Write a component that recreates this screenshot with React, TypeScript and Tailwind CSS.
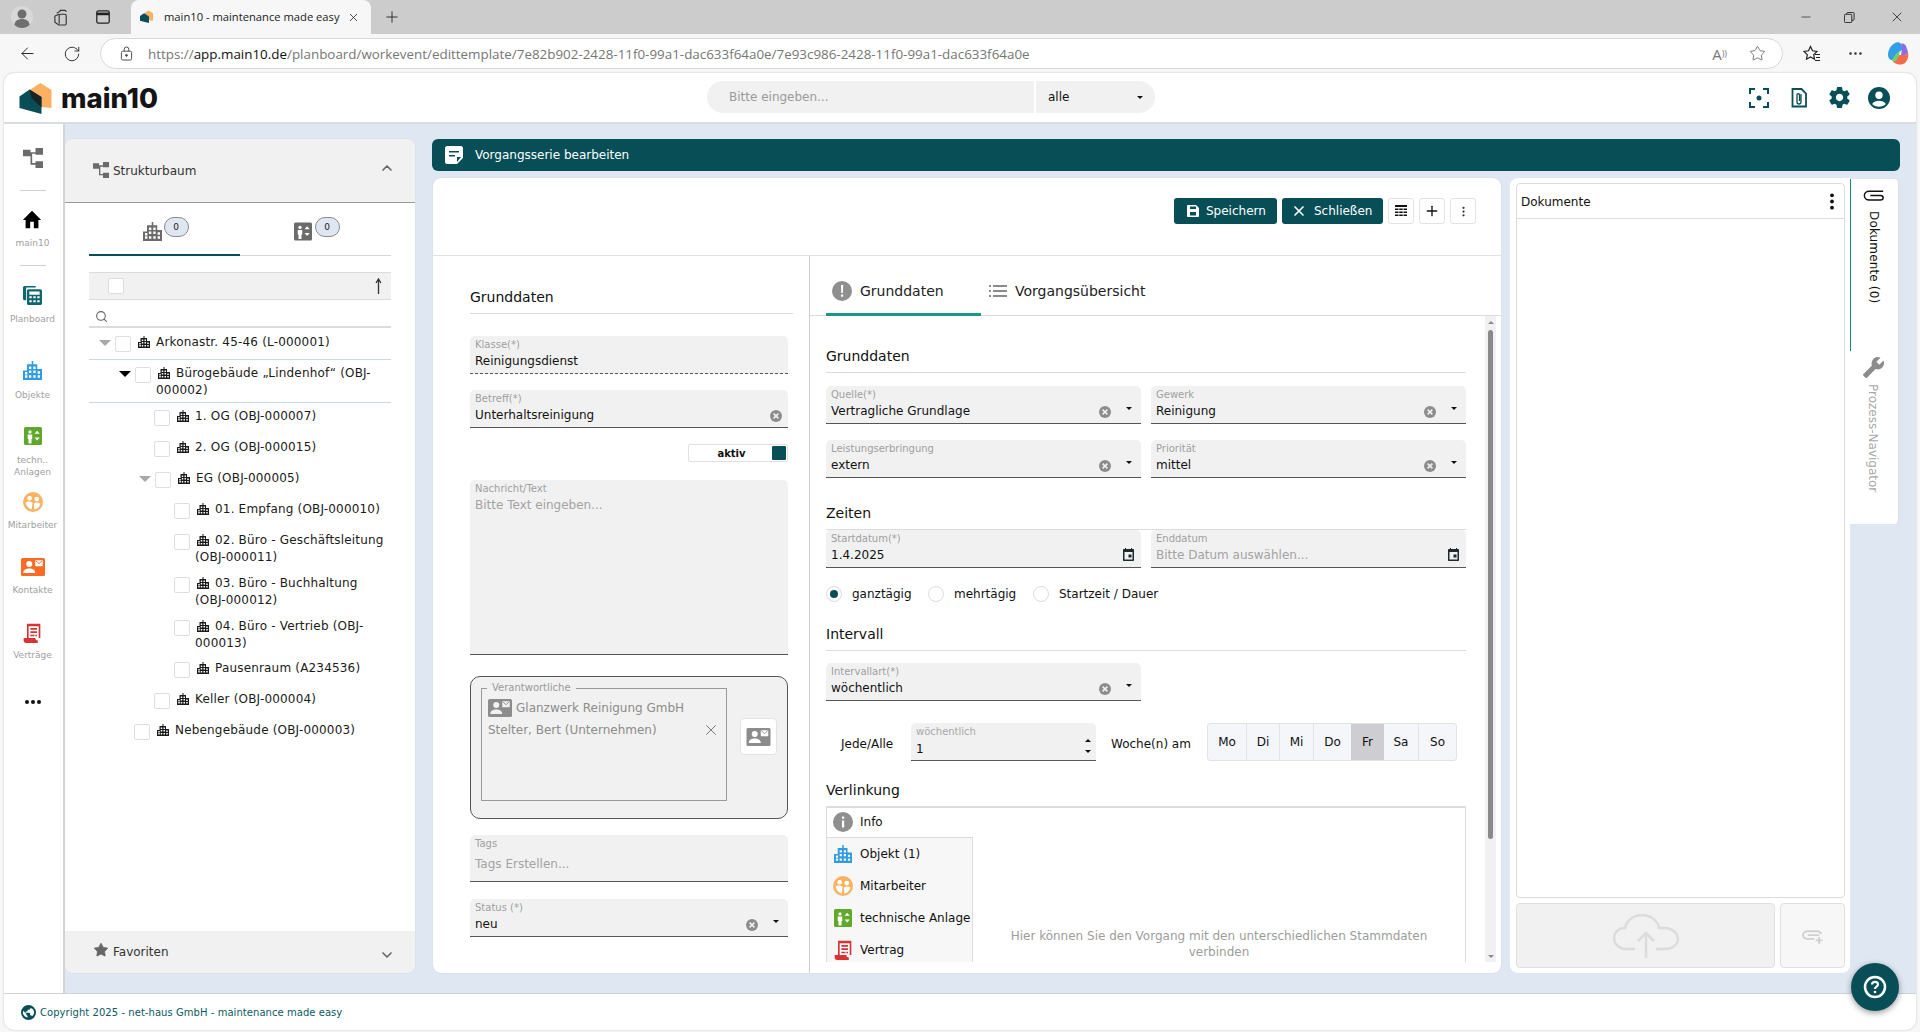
import React from "react";
import { ArrowLeft, RotateCw, Plus, X, Minus, ChevronUp, ChevronDown, Search, MoreHorizontal, Star } from "lucide-react";

function Building({ className = "" }: { className?: string }) {
  return (
    <svg viewBox="0 0 24 24" className={className} fill="currentColor">
      <path
        fillRule="evenodd"
        d="M11 0h2v4h5v6h6v14H0V12h5V4h6zM7.500 7v3h3V7zm5.500 0v3h3V7zm-5.500 5v3h3v-3zm5.500 0v3h3v-3zm5.500 1v3h3v-3zm-16 1v3h3v-3zm5 4v3h3v-3zm5.500 0v3h3v-3zm5.500 0v3h3v-3zm-16 0v3h3v-3z"
      />
    </svg>
  );
}

function TreeIcon({ className = "" }: { className?: string }) {
  return (
    <svg viewBox="0 0 24 24" className={className} fill="currentColor">
      <path d="M0 2h9v8H0zM15 0h9v8h-9zM15 16h9v8h-9zM9 5h6v2H11v11h4v2h-6z" />
    </svg>
  );
}

function Elevator({ className = "" }: { className?: string }) {
  return (
    <svg viewBox="0 0 24 24" className={className}>
      <rect x="0" y="0" width="24" height="24" rx="2" fill="currentColor" />
      <circle cx="8" cy="6.500" r="2.200" fill="#fff" />
      <path d="M5 10h6v6h-1v6H6v-6H5z" fill="#fff" />
      <path d="M14 9l3.500-4 3.500 4zM14 14h7l-3.500 4z" fill="#fff" />
    </svg>
  );
}

function People({ className = "" }: { className?: string }) {
  return (
    <svg viewBox="0 0 24 24" className={className}>
      <circle cx="12" cy="12" r="12" fill="currentColor" />
      <circle cx="8" cy="7.500" r="2.800" fill="#fff" />
      <circle cx="16.500" cy="8.500" r="2.800" fill="#fff" />
      <path d="M3 13c2-2 6-2 8.500 0l-1 8C6.500 20 4 17 3 13zM13 14c2-2 6-2 8 0-.8 3.600-3.600 6.400-7.500 7z" fill="#fff" />
    </svg>
  );
}

function Card({ className = "", accent = "#fff" }: { className?: string; accent?: string }) {
  return (
    <svg viewBox="0 0 32 24" className={className}>
      <rect width="32" height="24" rx="2" fill="currentColor" />
      <circle cx="11" cy="8" r="4" fill={accent} />
      <path d="M3 20c0-4 3-6 8-6s8 2 8 6z" fill={accent} />
      <rect x="19" y="3" width="10" height="8" fill={accent} />
      <path d="M19.500 3.500l4.500 4 4.500-4" stroke="currentColor" strokeWidth="1.200" fill="none" />
    </svg>
  );
}

function Contract({ className = "" }: { className?: string }) {
  return (
    <svg viewBox="0 0 20 24" className={className}>
      <path d="M6 2h12v16H6z" fill="#fff" />
      <path d="M4 1h16v17h-2V4H6v14H4z" fill="currentColor" />
      <path d="M0 18h14c0 2 1 3 3 3v3H3c-2 0-3-1-3-3z" fill="currentColor" />
      <path d="M8 6h8v2H8zM8 10h8v2H8zM8 14h5v2H8zM14 14h2v2h-2z" fill="currentColor" />
    </svg>
  );
}

function Planboard({ className = "" }: { className?: string }) {
  return (
    <svg viewBox="0 0 24 24" className={className} fill="currentColor">
      <path d="M2 0h14v2H4v16H2C1 18 0 17 0 16V2C0 1 1 0 2 0z" />
      <path fillRule="evenodd" d="M7 4h15c1 0 2 1 2 2v16c0 1-1 2-2 2H7c-1 0-2-1-2-2V6c0-1 1-2 2-2zm1 3v4h13V7zm0 6v2.500h3V13zm5 0v2.500h3V13zm5 0v2.500h3V13zM8 18v2.500h3V18zm5 0v2.500h3V18zm5 0v2.500h3V18z" />
    </svg>
  );
}

function Clear() {
  return (
    <svg viewBox="0 0 12 12" className="w-[12px] h-[12px] shrink-0 text-[#8c8c8c]">
      <circle cx="6" cy="6" r="6" fill="currentColor" />
      <path d="M3.600 3.600l4.800 4.800M8.400 3.600l-4.800 4.800" stroke="#f1f1f1" strokeWidth="1.500" />
    </svg>
  );
}

function Caret({ className = "" }: { className?: string }) {
  return (
    <svg viewBox="0 0 6 3" className={`w-[6px] h-[3px] shrink-0 ${className}`} fill="currentColor">
      <path d="M0 0h6L3 3z" />
    </svg>
  );
}

function CalendarIcon() {
  return (
    <svg viewBox="0 0 11 13" className="w-[11px] h-[13px] shrink-0 text-[#1d2a2d] -mt-[3px]" fill="currentColor">
      <path fillRule="evenodd" d="M2 0h1v1h5V0h1v1h1c.6 0 1 .4 1 1v10c0 .6-.4 1-1 1H1c-.6 0-1-.4-1-1V2c0-.6.4-1 1-1h1zM1.500 4v7.500h8V4zM5.500 6.500h3v3h-3z" />
    </svg>
  );
}

function Field({
  label,
  value,
  placeholder,
  clear,
  caret,
  cal,
  dashed,
}: {
  label: string;
  value?: string;
  placeholder?: string;
  clear?: boolean;
  caret?: boolean;
  cal?: boolean;
  dashed?: boolean;
}) {
  return (
    <div
      className={`h-[38px] bg-[#f1f1f1] rounded-t-[5px] pl-[5px] flex flex-col border-b ${
        dashed ? "border-dashed border-[#555]" : "border-[#555]"
      }`}
    >
      <div className="text-[10px] leading-[12px] mt-[3px] text-[#9f9f9f]">{label}</div>
      <div className="flex items-center h-[17px] mt-[2px]">
        <span className={`flex-1 text-[12px] leading-[17px] truncate ${value ? "text-[#111]" : "text-[#a3a3a3]"}`}>
          {value ?? placeholder}
        </span>
        {clear && (
          <span className={caret ? "mr-[21px]" : "mr-[6px]"}>
            <Clear />
          </span>
        )}
        {caret && <Caret className="mr-[9px] -mt-[6px] text-[#111] -ml-[6px]" />}
        {cal && (
          <span className="mr-[7px]">
            <CalendarIcon />
          </span>
        )}
      </div>
    </div>
  );
}

function SectionHead({ children, className = "", pb = "pb-[7px]" }: { children: React.ReactNode; className?: string; pb?: string }) {
  return <div className={`text-[14px] leading-[18px] text-[#111] border-b border-[#dcdcdc] ${pb} ${className}`}>{children}</div>;
}

function TreeRow({
  pl,
  tri,
  text,
  bordered,
  tight,
}: {
  pl: string;
  tri?: "open" | "active";
  text: string;
  bordered?: boolean;
  tight?: boolean;
}) {
  return (
    <div className={`flex items-start min-h-[31px] ${pl} ${bordered ? "border-b border-[#c8dadb]" : ""}`}>
      {tri && (
        <span className="w-[16px] shrink-0 pt-[11px]">
          <svg viewBox="0 0 12 6" className={`w-[12px] h-[6px] ${tri === "active" ? "text-black" : "text-[#a8a8a8]"}`} fill="currentColor">
            <path d="M0 0h12L6 6z" />
          </svg>
        </span>
      )}
      <span className="w-[16px] h-[16px] mt-[7px] mr-[5px] shrink-0 rounded-[2px] border border-[#dedede] bg-white" />
      <div className={`pt-[5px] pr-[4px] ${bordered || tight ? "pb-[3px]" : "pb-[4px]"} leading-[17px] text-[12px] tracking-[0.18px] text-[#1a1a1a] flex-1`}>
        <Building className="inline-block w-[12px] h-[12px] ml-[2px] mr-[6px] -mt-[1px] align-[-2px] text-[#1a1a1a]" />
        {text}
      </div>
    </div>
  );
}

function NavItem({ icon, label, className = "" }: { icon: React.ReactNode; label?: React.ReactNode; className?: string }) {
  return (
    <div className={`flex flex-col items-center ${className}`}>
      {icon}
      {label && <div className="text-[9px] leading-[12px] text-[#a0a0a0] text-center">{label}</div>}
    </div>
  );
}

function Radio({ checked, label, className = "" }: { checked?: boolean; label: string; className?: string }) {
  return (
    <div className={`flex items-center ${className}`}>
      <span className="w-[16px] h-[16px] rounded-full border border-[#dcdcdc] bg-white flex items-center justify-center">
        {checked && <span className="w-[8px] h-[8px] rounded-full bg-[#084e57]" />}
      </span>
      <span className="ml-[10px] text-[12px] leading-[16px] text-[#111]">{label}</span>
    </div>
  );
}

function LinkTab({ icon, label }: { icon: React.ReactNode; label: string }) {
  return (
    <div className="h-[32px] flex items-center pl-[6px] text-[12px] text-[#111]">
      <span className="w-[20px] flex justify-center mr-[7px] shrink-0">{icon}</span>
      <span className="whitespace-nowrap">{label}</span>
    </div>
  );
}

function IconBtn({ children }: { children: React.ReactNode }) {
  return (
    <button className="w-[26px] h-[26px] rounded-[3px] border border-[#e3e3e3] bg-white flex items-center justify-center">
      {children}
    </button>
  );
}

export default function App() {
  return (
    <div className="relative w-[1920px] h-[1032px] overflow-hidden flex flex-col bg-[#f7f7f7] font-['DejaVu_Sans',sans-serif] text-[12px]">
      {/* browser tab strip */}
      <div className="h-[34px] bg-[#cccccc] flex items-center shrink-0 font-['Open_Sans',sans-serif] text-[#222]">
        <div className="w-[131px] flex items-center shrink-0">
          <svg viewBox="0 0 22 24" className="w-[22px] h-[24px] ml-[11px] text-[#6e6e6e]" fill="currentColor">
            <circle cx="11" cy="12" r="11" fill="#d8d8d8" />
            <circle cx="11" cy="9" r="4.500" />
            <path d="M3.500 20c0-4 3.500-6 7.500-6s7.500 2 7.500 6c-2 2-4.500 3-7.500 3s-5.500-1-7.500-3z" />
          </svg>
          <svg viewBox="0 0 18 18" className="w-[17px] h-[17px] ml-[20px] text-[#333]" fill="none" stroke="currentColor" strokeWidth="1.200">
            <path d="M7 1.500h5.500c1 0 1.500 .5 1.500 1.500M4 4.500L8 2M2 7.500V14l4 3h6.500c1 0 1.500-.5 1.500-1.500V7c0-1-.5-1.500-1.500-1.500H8c-1 0-1.500 .5-1.500 1.500v8.500M2 7.500l4.500-2" />
          </svg>
          <svg viewBox="0 0 18 18" className="w-[16px] h-[16px] ml-[25px] text-[#222]" fill="none" stroke="currentColor" strokeWidth="1.400">
            <rect x="2" y="2" width="14" height="14" rx="2" />
            <path d="M2 5.500h14" strokeWidth="3" />
          </svg>
        </div>
        <div className="w-[240px] h-[34px] mt-0 bg-[#f7f7f7] rounded-t-[8px] flex items-center pl-[9px] shrink-0">
          <svg viewBox="0 0 32 32" className="w-[13px] h-[14px] shrink-0">
            <path d="M10 7L21 0L32 7V25L22 24V14Z" fill="#fbb161" />
            <path d="M0 13.500L10 6.500L22 14V31L0 25Z" fill="#084e57" />
          </svg>
          <span className="ml-[11px] text-[11.2px] leading-[16px] whitespace-nowrap w-[183px]">main10 - maintenance made easy</span>
          <X className="w-[13px] h-[13px] text-[#222]" strokeWidth={1.5} />
        </div>
        <Plus className="w-[18px] h-[18px] ml-[12px] text-[#222]" strokeWidth={1.2} />
        <div className="flex-1" />
        <Minus className="w-[14px] h-[14px] mr-[31px] text-[#222]" strokeWidth={1.2} />
        <svg viewBox="0 0 12 12" className="w-[11px] h-[11px] mr-[34px] text-[#222]" fill="none" stroke="currentColor" strokeWidth="1">
          <rect x=".5" y="2.500" width="8" height="9" rx="1" />
          <path d="M3 2.500V1.500c0-.5 .5-1 1-1h6c.5 0 1 .5 1 1V8c0 .5-.5 1-1 1H8.500" />
        </svg>
        <X className="w-[16px] h-[16px] mr-[15px] text-[#222]" strokeWidth={1.2} />
      </div>

      {/* browser toolbar */}
      <div className="h-[39px] flex items-center shrink-0 font-['Open_Sans',sans-serif]">
        <ArrowLeft className="w-[19px] h-[19px] ml-[18px] text-[#222]" strokeWidth={1.2} />
        <RotateCw className="w-[18px] h-[18px] ml-[26px] text-[#222]" strokeWidth={1.2} />
        <div className="w-[1683px] h-[31px] ml-[19px] rounded-full bg-white border border-[#d8d8d8] flex items-center pl-[19px] shrink-0">
          <svg viewBox="0 0 14 16" className="w-[13px] h-[15px] text-[#444] shrink-0" fill="none" stroke="currentColor" strokeWidth="1">
            <rect x="1.500" y="5.500" width="11" height="9.500" rx="1.500" />
            <path d="M4.500 5.500V3.500a2.500 2.500 0 015 0v2" />
            <circle cx="7" cy="10" r="1" fill="currentColor" />
          </svg>
          <span className="ml-[15px] text-[13.4px] leading-[16px] whitespace-nowrap text-[#767676]">
            https://<span className="text-[#111]">app.main10.de</span>/planboard/workevent/edittemplate/7e82b902-2428-11f0-99a1-dac633f64a0e/7e93c986-2428-11f0-99a1-dac633f64a0e
          </span>
          <div className="flex-1" />
          <span className="text-[15px] leading-[16px] text-[#777] mr-[22px]">A<span className="text-[9px] align-top">))</span></span>
          <Star className="w-[17px] h-[17px] text-[#555] mr-[16px]" strokeWidth={1.1} />
        </div>
        <svg viewBox="0 0 18 18" className="w-[18px] h-[18px] ml-[20px] text-[#222]" fill="none" stroke="currentColor" strokeWidth="1.200">
          <path d="M7.500 1.500l2 4.300 4.500 .6-3.300 3.200 .8 4.600-4-2.200-4 2.200 .8-4.600L1 6.400l4.500-.6zM12 9.500h5M13 12.500h4M12 15.500h5" />
        </svg>
        <MoreHorizontal className="w-[17px] h-[17px] ml-[26px] text-[#222]" strokeWidth={1.5} />
        <svg viewBox="0 0 22 24" className="w-[22px] h-[24px] ml-[23px]">
          <path d="M8 1c2-1 5-1 6 1l2 5-7 6-4 5c-2 0-4-2-4-5 0-5 3-10 7-12z" fill="#2f9fe8" />
          <path d="M14 2c2-1 4 0 5 2l2 6c0 2-2 3-4 3l-3 0 1-6z" fill="#8f6be8" />
          <path d="M5 18l4-5 8 0c2 0 4-2 4-3 1 5-1 11-5 12-3 1-8 1-11-4z" fill="#f56a4a" />
          <path d="M8 13l5-5-1 6-3 5c-2 1-3 0-4-1z" fill="#6fd06f" />
        </svg>
      </div>

      {/* application shell */}
      <div className="flex-1 mx-[4px] mb-[2px] rounded-[10px] bg-white overflow-hidden flex flex-col shadow-[0_0_2px_#bbb]">
        {/* app header */}
        <header className="h-[51px] shrink-0 border-b-2 border-[#d9dde2] flex items-center">
          <svg viewBox="0 0 32 32" className="w-[33px] h-[32px] ml-[15px] mt-[2px] shrink-0">
            <path d="M10 7L21 0L32 7V25L22 24V14Z" fill="#fbb161" />
            <path d="M0 13.500L10 6.500L22 14V31L0 25Z" fill="#084e57" />
            <path d="M10 6.500L22 14V24.500L12 15Z" fill="#1d2226" />
          </svg>
          <span className="ml-[9px] w-[97px] shrink-0 font-['Inter',sans-serif] font-extrabold text-[27.5px] leading-[36px] text-[#141414]">main10</span>
          <div className="ml-[549px] flex h-[32px] -mt-[1px]">
            <div className="w-[327px] rounded-l-[16px] bg-[#f1f1f1] pl-[22px] flex items-center text-[12px] text-[#9a9a9a]">Bitte eingeben...</div>
            <div className="w-[119px] ml-[2px] rounded-r-[16px] bg-[#f1f1f1] pl-[12px] flex items-center text-[12px] text-[#111]">
              alle
              <Caret className="ml-[68px] text-[#111]" />
            </div>
          </div>
          <div className="flex-1" />
          <svg viewBox="0 0 20 20" className="w-[20px] h-[20px] text-[#084e57]" fill="none" stroke="currentColor" strokeWidth="2">
            <path d="M1 6V1h5M14 1h5v5M1 14v5h5M14 19h5v-5" />
            <circle cx="10" cy="10" r="2.500" fill="currentColor" stroke="none" />
          </svg>
          <svg viewBox="0 0 16 20" className="w-[16px] h-[20px] ml-[22px] text-[#084e57]" fill="none" stroke="currentColor" strokeWidth="1.800">
            <path d="M1.500 18.500V1h9l4.500 4.500v13z" />
            <path d="M10 6v8a2 2 0 01-4 0V7a1.200 1.200 0 012.500 0v6" strokeWidth="1.300" />
          </svg>
          <svg viewBox="0 0 24 24" className="w-[25px] h-[25px] ml-[20px] text-[#084e57]" fill="currentColor">
            <path d="M19.430 12.980c.04-.32.07-.64.07-.98s-.03-.66-.07-.98l2.110-1.650c.19-.15.240-.42.120-.64l-2-3.460c-.12-.22-.39-.3-.61-.22l-2.490 1c-.52-.4-1.080-.73-1.690-.98l-.38-2.650A.488.488 0 0014 2h-4c-.25 0-.46.18-.49.42l-.38 2.650c-.61.25-1.170.59-1.690.98l-2.490-1c-.23-.09-.49 0-.61.22l-2 3.460c-.13.220-.07.490.12.640l2.110 1.650c-.04.32-.07.650-.07.980s.03.660.07.980l-2.110 1.650c-.19.150-.24.420-.12.640l2 3.460c.12.220.39.300.61.220l2.490-1c.52.400 1.080.730 1.690.980l.38 2.650c.03.240.24.420.49.420h4c.25 0 .46-.18.49-.42l.38-2.650c.61-.25 1.170-.59 1.690-.98l2.490 1c.23.090.49 0 .61-.22l2-3.460c.12-.22.070-.49-.12-.64l-2.110-1.650zM12 15.500c-1.930 0-3.500-1.570-3.500-3.500s1.570-3.500 3.500-3.500 3.500 1.570 3.500 3.500-1.570 3.500-3.500 3.500z" />
          </svg>
          <svg viewBox="0 0 24 24" className="w-[22px] h-[22px] ml-[16px] mr-[26px] text-[#084e57]">
            <circle cx="12" cy="12" r="12" fill="currentColor" />
            <circle cx="12" cy="9" r="4" fill="#fff" />
            <path d="M4.500 18.500c1.500-2.500 4.500-3.500 7.500-3.500s6 1 7.500 3.500c-2 2-4.500 3-7.500 3s-5.500-1-7.500-3z" fill="#fff" />
          </svg>
        </header>

        {/* middle */}
        <div className="flex-1 flex min-h-0">
          {/* left nav */}
          <nav className="w-[61px] shrink-0 bg-white border-r-[2px] border-[#d4d4d4] flex flex-col items-center pr-[2px]">
            <NavItem className="mt-[24px]" icon={<TreeIcon className="w-[20px] h-[20px] text-[#6b6b6b]" />} />
            <div className="w-[26px] h-px bg-[#cfcfcf] mt-[22px]" />
            <NavItem
              className="mt-[19px]"
              icon={
                <svg viewBox="0 0 24 24" className="w-[22px] h-[22px] -mt-[1px] text-black mb-[6px]" fill="currentColor">
                  <path d="M10 21v-7h4v7h5v-9h3L12 2 2 12h3v9z" />
                </svg>
              }
              label="main10"
            />
            <div className="w-[26px] h-px bg-[#cfcfcf] mt-[16px]" />
            <NavItem className="mt-[20px]" icon={<Planboard className="w-[19px] h-[19px] text-[#0f6670] mb-[8px]" />} label="Planboard" />
            <NavItem className="mt-[36px]" icon={<Building className="w-[19px] h-[19px] text-[#2f9be0] mb-[9px]" />} label="Objekte" />
            <NavItem
              className="mt-[26px]"
              icon={<Elevator className="w-[18px] h-[18px] text-[#5fa82a] mb-[9px]" />}
              label={
                <>
                  techn..
                  <br />
                  Anlagen
                </>
              }
            />
            <NavItem className="mt-[14px]" icon={<People className="w-[20px] h-[20px] text-[#f9b262] mb-[7px]" />} label="Mitarbeiter" />
            <NavItem className="mt-[27px]" icon={<Card className="w-[24px] h-[18px] text-[#fb6b24] mb-[8px]" />} label="Kontakte" />
            <NavItem className="mt-[27px]" icon={<Contract className="w-[18px] h-[20px] text-[#d93232] mb-[6px]" />} label="Verträge" />
            <div className="mt-[39px] flex gap-[2px]">
              <span className="w-[4px] h-[4px] rounded-full bg-[#111]" />
              <span className="w-[4px] h-[4px] rounded-full bg-[#111]" />
              <span className="w-[4px] h-[4px] rounded-full bg-[#111]" />
            </div>
          </nav>

          {/* content */}
          <main className="flex-1 min-w-0 bg-[#dfe7f2] pt-[15px] pb-[20px] pr-[16px] flex gap-[17px]">
            {/* structure panel */}
            <aside className="w-[350px] shrink-0 bg-white rounded-[8px] flex flex-col overflow-hidden shadow-[0_0_1px_#bbb]">
              <div className="h-[64px] shrink-0 bg-[#f1f1f1] border-b border-[#999] flex items-center pl-[28px] pr-[20px] text-[#333]">
                <TreeIcon className="w-[16px] h-[16px] text-[#6b6b6b] mr-[4px] -mt-[2px]" />
                <span className="flex-1 text-[12px]">Strukturbaum</span>
                <ChevronUp className="w-[16px] h-[16px] text-[#666] -mt-[5px]" strokeWidth={2.5} />
              </div>
              <div className="flex-1 px-[24px] min-h-0">
                {/* tabs */}
                <div className="h-[53px] flex border-b border-[#d4d4d4]">
                  <div className="w-[151px] border-b-2 border-[#084e57] flex justify-center pl-[2px] -mb-px pt-[14px]">
                    <Building className="w-[19px] h-[19px] text-[#6b6b6b] mt-[5px]" />
                    <span className="ml-[2px] w-[25px] h-[20px] rounded-full bg-[#dfe7f2] border border-[#8a8a8a] text-[9px] leading-[18px] text-center text-[#222]">0</span>
                  </div>
                  <div className="w-[151px] flex justify-center pl-[2px] pt-[14px]">
                    <Elevator className="w-[18px] h-[19px] text-[#6b6b6b] mt-[5px]" />
                    <span className="ml-[3px] w-[25px] h-[20px] rounded-full bg-[#dfe7f2] border border-[#8a8a8a] text-[9px] leading-[18px] text-center text-[#222]">0</span>
                  </div>
                </div>
                {/* table head */}
                <div className="mt-[16px] h-[28px] bg-[#f1f1f1] border-y border-[#dcdcdc] flex items-center pl-[19px] pr-[9px]">
                  <span className="w-[16px] h-[16px] rounded-[2px] border border-[#dedede] bg-white" />
                  <span className="flex-1" />
                  <svg viewBox="0 0 7 16" className="w-[7px] h-[16px] text-[#333]" fill="none" stroke="currentColor" strokeWidth="1.300">
                    <path d="M3.500 16V1M1 5l2.500-4L6 5" />
                  </svg>
                </div>
                <div className="h-[28px] border-b-2 border-[#dcdcdc] flex items-center pl-[6px] pt-[6px]">
                  <Search className="w-[13px] h-[13px] text-[#666]" strokeWidth={2} />
                </div>
                {/* tree */}
                <div className="mt-[1px]">
                  <TreeRow pl="pl-[10px]" tri="open" text="Arkonastr. 45-46 (L-000001)" bordered />
                  <TreeRow pl="pl-[30px]" tri="active" text="Bürogebäude „Lindenhof“ (OBJ-000002)" bordered />
                  <TreeRow pl="pl-[65px]" text="1. OG (OBJ-000007)" />
                  <TreeRow pl="pl-[65px]" text="2. OG (OBJ-000015)" />
                  <TreeRow pl="pl-[50px]" tri="open" text="EG (OBJ-000005)" />
                  <TreeRow pl="pl-[85px]" text="01. Empfang (OBJ-000010)" />
                  <TreeRow pl="pl-[85px]" text="02. Büro - Geschäftsleitung (OBJ-000011)" />
                  <TreeRow pl="pl-[85px]" text="03. Büro - Buchhaltung (OBJ-000012)" />
                  <TreeRow pl="pl-[85px]" text="04. Büro - Vertrieb (OBJ-000013)" tight />
                  <TreeRow pl="pl-[85px]" text="Pausenraum (A234536)" />
                  <TreeRow pl="pl-[65px]" text="Keller (OBJ-000004)" />
                  <TreeRow pl="pl-[45px]" text="Nebengebäude (OBJ-000003)" />
                </div>
              </div>
              <div className="h-[42px] shrink-0 bg-[#f1f1f1] flex items-center pl-[28px] pr-[20px] text-[#333]">
                <Star className="w-[16px] h-[16px] text-[#666] mr-[4px] -mt-[4px]" fill="currentColor" strokeWidth={1} />
                <span className="flex-1 text-[12px]">Favoriten</span>
                <ChevronDown className="w-[16px] h-[16px] text-[#666] mt-[6px]" strokeWidth={2.5} />
              </div>
            </aside>

            {/* center */}
            <div className="flex-1 min-w-0 flex flex-col pr-[2px]">
              <div className="h-[32px] -mr-[2px] shrink-0 rounded-[6px] bg-[#084e57] flex items-center pl-[13px] text-white">
                <svg viewBox="0 0 18 18" className="w-[18px] h-[18px] shrink-0" fill="currentColor">
                  <path fillRule="evenodd" d="M2 0h14c1 0 2 1 2 2v10l-6 6H2c-1 0-2-1-2-2V2C0 1 1 0 2 0zm2 5v1.600h10V5zm0 4v1.600h6V9zm8 2v5l4-5z" />
                </svg>
                <span className="ml-[12px] text-[12px]">Vorgangsserie bearbeiten</span>
              </div>
              <div className="flex-1 min-h-0 mt-[7px] ml-[1px] flex">
                {/* main card */}
                <section className="w-[1068px] shrink-0 bg-white rounded-[8px] flex flex-col overflow-hidden shadow-[0_0_1px_#bbb]">
                  <div className="h-[78px] shrink-0 border-b border-[#e2e2e2] flex items-start justify-end pt-[20px] pr-[25px]">
                    <button className="w-[103px] h-[26px] rounded-[3px] bg-[#084e57] text-white flex items-center pl-[13px] text-[12px]">
                      <svg viewBox="0 0 12 12" className="w-[12px] h-[12px] mr-[7px]" fill="currentColor">
                        <path fillRule="evenodd" d="M1 0h8l3 3v8c0 .6-.4 1-1 1H1c-.6 0-1-.4-1-1V1c0-.6.4-1 1-1zm2 1.500V4h6V1.500zM3 7v3.500h6V7z" />
                      </svg>
                      Speichern
                    </button>
                    <button className="w-[101px] h-[26px] ml-[5px] rounded-[3px] bg-[#084e57] text-white flex items-center pl-[9px] text-[12px]">
                      <X className="w-[16px] h-[16px] mr-[7px]" strokeWidth={2.5} />
                      Schließen
                    </button>
                    <div className="ml-[5px] flex gap-[5px]">
                      <IconBtn>
                        <svg viewBox="0 0 12 12" className="w-[12px] h-[12px] text-[#111]" fill="currentColor">
                          <path d="M0 0h12v2H0zM0 3.500h3.500v1.500H0zM4.250 3.500h3.500v1.500h-3.500zM8.500 3.500H12v1.500H8.500zM0 6.500h3.500V8H0zM4.250 6.500h3.500V8h-3.500zM8.500 6.500H12V8H8.500zM0 9.500h3.500V11H0zM4.250 9.500h3.500V11h-3.500zM8.500 9.500H12V11H8.500z" />
                        </svg>
                      </IconBtn>
                      <IconBtn>
                        <Plus className="w-[16px] h-[16px] text-[#111]" strokeWidth={2} />
                      </IconBtn>
                      <IconBtn>
                        <svg viewBox="0 0 4 14" className="w-[3px] h-[11px] text-[#333]" fill="currentColor">
                          <circle cx="2" cy="2" r="1.500" />
                          <circle cx="2" cy="7" r="1.500" />
                          <circle cx="2" cy="12" r="1.500" />
                        </svg>
                      </IconBtn>
                    </div>
                  </div>

                  <div className="flex-1 min-h-0 flex">
                    {/* left form */}
                    <div className="w-[377px] shrink-0 pl-[37px] border-r border-[#cfcfcf]">
                      <SectionHead className="mt-[32px] w-[323px]">Grunddaten</SectionHead>
                      <div className="w-[318px] flex flex-col">
                        <div className="mt-[22px]">
                          <Field label="Klasse(*)" value="Reinigungsdienst" dashed />
                        </div>
                        <div className="mt-[16px]">
                          <Field label="Betreff(*)" value="Unterhaltsreinigung" clear />
                        </div>
                        <div className="mt-[16px] self-end w-[100px] h-[18px] border border-[#e0e0e0] rounded-[2px] flex items-center pr-[1px]">
                          <span className="flex-1 text-center text-[10px] font-bold text-[#111] pl-[2px]">aktiv</span>
                          <span className="w-[14px] h-[14px] rounded-[1px] bg-[#084e57]" />
                        </div>
                        <div className="mt-[18px] h-[175px] bg-[#f1f1f1] rounded-t-[5px] border-b border-[#555] pl-[5px]">
                          <div className="text-[10px] leading-[12px] pt-[3px] text-[#9f9f9f] h-[15px]">Nachricht/Text</div>
                          <div className="text-[12px] leading-[17px] mt-[2px] text-[#a3a3a3]">Bitte Text eingeben...</div>
                        </div>
                        <div className="mt-[21px] h-[143px] bg-[#f1f1f1] border border-[#555] rounded-[10px] flex items-start pl-[10px]">
                          <fieldset className="w-[246px] h-[119px] mt-[5px] border border-[#999] pl-[6px] pr-[6px]">
                            <legend className="-ml-px px-[5px] text-[10px] leading-[12px] text-[#9a9a9a]">Verantwortliche</legend>
                            <div className="flex items-center h-[20px] mt-[4px] text-[12px] text-[#8c8c8c]">
                              <Card className="w-[24px] h-[18px] text-[#8c8c8c] mr-[4px]" accent="#f1f1f1" />
                              Glanzwerk Reinigung GmbH
                            </div>
                            <div className="flex items-center h-[23px] text-[12px] text-[#8c8c8c]">
                              <span className="flex-1">Stelter, Bert (Unternehmen)</span>
                              <X className="w-[18px] h-[18px] text-[#777]" strokeWidth={1.3} />
                            </div>
                          </fieldset>
                          <button className="ml-[13px] mt-[41px] w-[37px] h-[37px] rounded-[4px] bg-white border border-[#e3e3e3] flex items-center justify-center">
                            <Card className="w-[25px] h-[18px] text-[#8c8c8c]" />
                          </button>
                        </div>
                        <div className="mt-[16px] h-[47px] bg-[#f1f1f1] rounded-t-[5px] border-b border-[#555] pl-[5px]">
                          <div className="text-[10px] leading-[12px] pt-[3px] h-[15px] text-[#9f9f9f]">Tags</div>
                          <div className="text-[12px] leading-[17px] mt-[6px] text-[#a3a3a3]">Tags Erstellen...</div>
                        </div>
                        <div className="mt-[17px]">
                          <Field label="Status (*)" value="neu" clear caret />
                        </div>
                      </div>
                    </div>

                    {/* right form */}
                    <div className="flex-1 min-w-0 flex flex-col pb-[11px]">
                      <div className="h-[60px] shrink-0 border-b border-[#dcdcdc] flex pl-[16px]">
                        <div className="w-[155px] h-[60px] border-b-[3px] border-[#1a9988] pl-[6px] pt-[13px] flex items-center text-[14px] text-[#222]">
                          <svg viewBox="0 0 20 20" className="w-[20px] h-[20px] mr-[8px]">
                            <circle cx="10" cy="10" r="10" fill="#8f8f8f" />
                            <path d="M9 4h2.200l-.3 8H9.300zM9 13.500h2.200v2.300H9z" fill="#fff" />
                          </svg>
                          Grunddaten
                        </div>
                        <div className="pl-[8px] pt-[13px] flex items-center text-[14px] text-[#222] h-[57px]">
                          <svg viewBox="0 0 18 12" className="w-[18px] h-[12px] mr-[8px] text-[#8a8a8a]" fill="currentColor">
                            <path d="M0 0h2v2H0zM4 0h14v2H4zM0 5h2v2H0zM4 5h14v2H4zM0 10h2v2H0zM4 10h14v2H4z" />
                          </svg>
                          Vorgangsübersicht
                        </div>
                      </div>
                      <div className="flex-1 min-h-0 flex overflow-hidden pr-[4px]">
                        <div className="w-[675px] shrink-0 pl-[16px] pr-[19px]">
                          <SectionHead className="mt-[31px]">Grunddaten</SectionHead>
                          <div className="mt-[13px] grid grid-cols-2 gap-x-[10px] gap-y-[16px]">
                            <Field label="Quelle(*)" value="Vertragliche Grundlage" clear caret />
                            <Field label="Gewerk" value="Reinigung" clear caret />
                            <Field label="Leistungserbringung" value="extern" clear caret />
                            <Field label="Priorität" value="mittel" clear caret />
                          </div>
                          <SectionHead className="mt-[26px]">Zeiten</SectionHead>
                          <div className="grid grid-cols-2 gap-x-[10px]">
                            <Field label="Startdatum(*)" value="1.4.2025" cal />
                            <Field label="Enddatum" placeholder="Bitte Datum auswählen..." cal />
                          </div>
                          <div className="mt-[18px] flex">
                            <Radio checked label="ganztägig" className="w-[102px]" />
                            <Radio label="mehrtägig" className="w-[105px]" />
                            <Radio label="Startzeit / Dauer" />
                          </div>
                          <SectionHead className="mt-[23px]">Intervall</SectionHead>
                          <div className="mt-[12px] w-[315px]">
                            <Field label="Intervallart(*)" value="wöchentlich" clear caret />
                          </div>
                          <div className="mt-[22px] flex items-start">
                            <div className="w-[85px] pl-[15px] pt-[12px] text-[12px] leading-[18px] text-[#111]">Jede/Alle</div>
                            <div className="w-[185px] h-[38px] bg-[#f1f1f1] rounded-t-[5px] border-b border-[#555] pl-[5px] flex">
                              <div className="flex-1">
                                <div className="text-[10px] leading-[12px] pt-[3px] h-[15px] text-[#a8a8a8]">wöchentlich</div>
                                <div className="text-[12px] leading-[17px] mt-[3px] text-[#111]">1</div>
                              </div>
                              <div className="w-[11px] mt-[16px] flex flex-col items-start gap-[8px] text-[#111]">
                                <Caret className="rotate-180" />
                                <Caret />
                              </div>
                            </div>
                            <div className="w-[111px] pl-[15px] pt-[12px] text-[12px] leading-[18px] text-[#111] whitespace-nowrap">Woche(n) am</div>
                            <div className="w-[250px] h-[38px] rounded-[3px] border border-[#e0e3e8] bg-[#f4f6fa] flex text-[12px] text-[#111] overflow-hidden">
                              <span className="w-[39px] flex items-center justify-center border-r border-[#e0e3e8]">Mo</span>
                              <span className="w-[33px] flex items-center justify-center border-r border-[#e0e3e8]">Di</span>
                              <span className="w-[34px] flex items-center justify-center border-r border-[#e0e3e8]">Mi</span>
                              <span className="w-[37px] flex items-center justify-center">Do</span>
                              <span className="w-[33px] flex items-center justify-center bg-[#cdcdd2]">Fr</span>
                              <span className="w-[35px] flex items-center justify-center border-r border-[#e0e3e8]">Sa</span>
                              <span className="flex-1 flex items-center justify-center">So</span>
                            </div>
                          </div>
                          <div className="mt-[20px] text-[14px] leading-[18px] text-[#111]">Verlinkung</div>
                          <div className="mt-[7px] h-[200px] border-t-2 border-x border-[#dcdcdc] flex">
                            <div className="w-[146px] shrink-0">
                              <div className="h-[29px] flex items-center pl-[6px] pb-[1px] text-[12px] font-medium text-[#111]">
                                <svg viewBox="0 0 20 20" className="w-[20px] h-[20px] mr-[7px]">
                                  <circle cx="10" cy="10" r="10" fill="#8f8f8f" />
                                  <path d="M9 8.500h2.200V15.500H9zM9 4.500h2.200v2.200H9z" fill="#fff" />
                                </svg>
                                Info
                              </div>
                              <div className="bg-[#f7f7f7] border-t border-r border-[#dcdcdc]">
                                <LinkTab icon={<Building className="w-[18px] h-[20px] text-[#2f9be0]" />} label="Objekt (1)" />
                                <LinkTab icon={<People className="w-[20px] h-[20px] text-[#f9b262]" />} label="Mitarbeiter" />
                                <LinkTab icon={<Elevator className="w-[18px] h-[20px] text-[#5fa82a]" />} label="technische Anlage" />
                                <LinkTab icon={<Contract className="w-[18px] h-[20px] text-[#d93232]" />} label="Vertrag" />
                                <div className="h-[40px]" />
                              </div>
                            </div>
                            <div className="flex-1 px-[30px]">
                              <p className="mt-[120px] text-center text-[12px] leading-[16px] text-[#9c9c9c]">
                                Hier können Sie den Vorgang mit den unterschiedlichen Stammdaten verbinden
                              </p>
                            </div>
                          </div>
                        </div>
                        <div className="w-[11px] shrink-0 bg-[#f1f1f1] flex flex-col items-center pt-[5px] pb-[4px]">
                          <Caret className="rotate-180 text-[#8a8a8a]" />
                          <div className="mt-[6px] w-[5px] h-[509px] rounded-full bg-[#8a8a8a]" />
                          <div className="flex-1" />
                          <Caret className="text-[#8a8a8a]" />
                        </div>
                      </div>
                    </div>
                  </div>
                </section>

                {/* documents card */}
                <section className="w-[340px] ml-[9px] shrink-0 bg-white rounded-l-[8px] rounded-br-[8px] pl-[6px] pr-[5px] pt-[5px] pb-[5px] flex flex-col">
                  <div className="flex-1 min-h-0 border border-[#dcdcdc] rounded-[4px]">
                    <div className="h-[35px] border-b border-[#dcdcdc] pl-[4px] pr-[10px] pt-[1px] flex items-center text-[12px] text-[#111]">
                      <span className="flex-1">Dokumente</span>
                      <svg viewBox="0 0 4 18" className="w-[4px] h-[17px] text-[#111]" fill="currentColor">
                        <circle cx="2" cy="2.500" r="2" />
                        <circle cx="2" cy="9" r="2" />
                        <circle cx="2" cy="15.500" r="2" />
                      </svg>
                    </div>
                  </div>
                  <div className="mt-[5px] h-[65px] shrink-0 flex gap-[5px]">
                    <div className="w-[259px] bg-[#f1f1f1] border border-[#e0e0e0] rounded-[4px] flex items-center justify-center">
                      <svg viewBox="0 0 66 44" className="w-[66px] h-[44px] text-[#dcdcdc]" fill="none" stroke="currentColor" strokeWidth="2.500">
                        <path d="M22 35H13C6 35 1 30 1 24c0-6 5-10 11-10 2-8 9-13 17-13 9 0 16 6 17 13h6c7 0 13 5 13 11s-6 10-13 10H43" />
                        <path d="M33 44V20M25 27l8-8 8 8" />
                      </svg>
                    </div>
                    <div className="flex-1 bg-[#f7f7f7] border border-[#e0e0e0] rounded-[4px] flex items-center justify-center">
                      <svg viewBox="0 0 22 14" className="w-[21px] h-[14px] text-[#d0d0d0] mt-[2px]" fill="none" stroke="currentColor" strokeWidth="2">
                        <path d="M20 4c-.5-2-2-3-4-3H6C3 1 1 3 1 5s2 4 5 4h7M6 5h12M18 7v7M14.500 10.500h7" />
                      </svg>
                    </div>
                  </div>
                </section>

                {/* side tabs */}
                <section className="w-[48px] h-[345px] mt-[1px] shrink-0 bg-white rounded-r-[4px] flex flex-col shadow-[1px_0_1px_#ddd]">
                  <div className="h-[172px] border-l border-[#1a8a80] flex flex-col items-center pt-[9px] pr-[2px]">
                    <svg viewBox="0 0 24 14" className="w-[22px] h-[14px] text-[#111]" fill="none" stroke="currentColor" strokeWidth="1.600">
                      <path d="M22 3H7C3.500 3 1.500 5 1.500 7.500S3.500 12.500 7 12.500h12c2 0 3-1 3-2.500s-1-2.500-3-2.500H8" />
                    </svg>
                    <div className="mt-[9px] [writing-mode:vertical-rl] text-[12px] leading-[16px] tracking-[0.15px] text-[#111]">Dokumente (0)</div>
                  </div>
                  <div className="flex flex-col items-center pt-[5px] pr-[2px]">
                    <svg viewBox="0 0 24 24" className="w-[23px] h-[23px] text-[#8c8c8c]" fill="currentColor">
                      <path d="M22.700 19l-9.100-9.100c.9-2.300.4-5-1.500-6.900-2-2-5-2.400-7.400-1.300L9 6 6 9 1.600 4.700C.4 7.100.9 10.100 2.900 12.100c1.900 1.900 4.600 2.400 6.900 1.500l9.100 9.100c.4.4 1 .4 1.400 0l2.300-2.300c.5-.4.5-1.100.1-1.400z" transform="matrix(-1 0 0 1 24 0)" />
                    </svg>
                    <div className="mt-[5px] [writing-mode:vertical-rl] text-[12px] leading-[16px] text-[#a8a8a8]">Prozess-Navigator</div>
                  </div>
                </section>
              </div>
            </div>
          </main>
        </div>

        {/* footer */}
        <footer className="h-[37px] shrink-0 border-t border-[#cfd3d8] flex items-center pl-[17px] text-[10px] tracking-[0.05px] text-[#0b5a63]">
          <svg viewBox="0 0 24 24" className="w-[15px] h-[15px] mr-[4px] text-[#084e57]" fill="currentColor">
            <path d="M12 0a12 12 0 100 24 12 12 0 000-24zM3 12c0-1 .2-2 .5-3l5 5v1c0 1 1 2 2 2v3c-4-.5-7.500-4-7.500-8zm14.500 6c-.3-.8-1-1.500-1.900-1.500h-1v-3c0-.6-.4-1-1-1H7.500v-2h2c.6 0 1-.4 1-1v-2h2c1.100 0 2-.9 2-2v-.4C18.500 4.800 21 8 21 12c0 2.300-1.300 4.500-3.500 6z" />
          </svg>
          Copyright 2025 - net-haus GmbH - maintenance made easy
        </footer>
      </div>

      {/* help button */}
      <button className="absolute left-[1851px] top-[963px] w-[48px] h-[48px] rounded-full bg-[#084e57] flex items-center justify-center shadow-[0_2px_6px_rgba(0,0,0,0.4)]">
        <svg viewBox="0 0 24 24" className="w-[24px] h-[24px] text-white" fill="none" stroke="currentColor" strokeWidth="2.500">
          <circle cx="12" cy="12" r="10" />
          <path d="M9 9.500C9 7.500 10.500 6.800 12 6.800s3 1 3 2.600c0 2.200-3 2.200-3 4.600" strokeWidth="2.200" />
          <circle cx="12" cy="17" r="1.300" fill="currentColor" stroke="none" />
        </svg>
      </button>
    </div>
  );
}
